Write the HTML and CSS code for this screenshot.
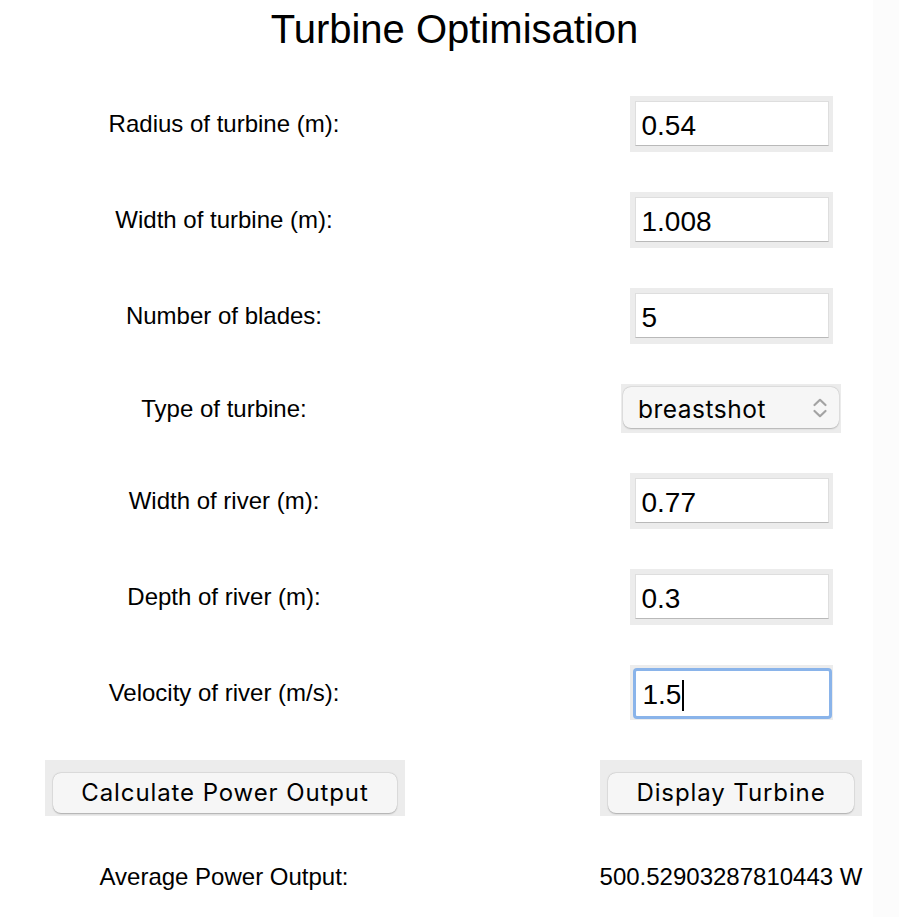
FILE: index.html
```html
<!DOCTYPE html>
<html lang="en">
<head>
<meta charset="utf-8">
<title>Turbine Optimisation</title>
<link rel="stylesheet" href="styles.css">
</head>
<body>
<main class="app">
  <h1 class="title">Turbine Optimisation</h1>

  <section class="form">
    <label class="label" for="radius">Radius of turbine (m):</label>
    <div class="field"><input class="entry" id="radius" type="text" value="0.54"></div>

    <label class="label" for="width">Width of turbine (m):</label>
    <div class="field"><input class="entry" id="width" type="text" value="1.008"></div>

    <label class="label" for="blades">Number of blades:</label>
    <div class="field"><input class="entry" id="blades" type="text" value="5"></div>

    <span class="label">Type of turbine:</span>
    <div class="field field-select">
      <div class="select">
        <span class="select-text">breastshot</span>
        <svg class="chevrons" width="16" height="22" viewBox="0 0 16 22" aria-hidden="true">
          <path d="M2.5 8 L8 2.8 L13.5 8" fill="none" stroke="#a3a3a3" stroke-width="2.2" stroke-linecap="round" stroke-linejoin="round"/>
          <path d="M2.5 14 L8 19.2 L13.5 14" fill="none" stroke="#a3a3a3" stroke-width="2.2" stroke-linecap="round" stroke-linejoin="round"/>
        </svg>
      </div>
    </div>

    <label class="label" for="rwidth">Width of river (m):</label>
    <div class="field"><input class="entry" id="rwidth" type="text" value="0.77"></div>

    <label class="label" for="depth">Depth of river (m):</label>
    <div class="field"><input class="entry" id="depth" type="text" value="0.3"></div>

    <span class="label">Velocity of river (m/s):</span>
    <div class="field field-focus">
      <div class="entry entry-focus">1.5<span class="caret"></span></div>
    </div>

    <div class="btn-wrap btn-wrap-wide"><button class="btn" type="button">Calculate Power Output</button></div>
    <div class="btn-wrap btn-wrap-narrow"><button class="btn" type="button">Display Turbine</button></div>
  </section>

  <section class="result">
    <span class="label">Average Power Output:</span>
    <span class="label">500.52903287810443 W</span>
  </section>
</main>
</body>
</html>
```

FILE: styles.css
```css
html, body {
  margin: 0;
  padding: 0;
}

body {
  width: 899px;
  height: 917px;
  overflow: hidden;
  background: linear-gradient(to right, #ffffff 0, #ffffff 873px, #fcfcfc 873px, #fcfcfc 100%);
  font-family: "Liberation Sans", Arial, sans-serif;
  color: #000;
}

.app {
  padding-top: 6px;
}

.title {
  margin: 0;
  padding-left: 10px;
  font-size: 40px;
  line-height: 46px;
  font-weight: normal;
  text-align: center;
}

.form {
  display: grid;
  grid-template-columns: 448px 336px;
  column-gap: 115px;
  row-gap: 40px;
  margin-top: 44px;
  align-items: center;
}

.label {
  justify-self: center;
  font-size: 24px;
  line-height: 28px;
  white-space: nowrap;
}

.field {
  justify-self: center;
  box-sizing: border-box;
  width: 203px;
  height: 56px;
  padding: 5px 4px 6px 5px;
  background: #ececec;
}

.entry {
  display: block;
  box-sizing: border-box;
  width: 194px;
  height: 45px;
  margin: 0;
  padding: 4px 0 0 6px;
  border: 1px solid #dedede;
  border-bottom-color: #b9b9b9;
  border-radius: 0;
  background: #fff;
  font-family: "Liberation Sans", Arial, sans-serif;
  font-size: 28px;
  color: #000;
  outline: none;
}

.field-select {
  width: 220px;
  height: 49px;
  padding: 3px 2px 5px 2px;
}

.select {
  box-sizing: border-box;
  display: flex;
  align-items: center;
  justify-content: space-between;
  height: 41px;
  padding: 0 11px 0 15px;
  border-radius: 8px;
  background: #f6f6f6;
  box-shadow: 0 0.5px 1.5px rgba(0, 0, 0, 0.22), 0 0 0 0.5px rgba(0, 0, 0, 0.06);
}

.select-text {
  font-family: Inter, "Noto Sans", sans-serif;
  font-size: 24.5px;
  letter-spacing: 0.5px;
  line-height: 28px;
  padding-top: 2px;
}

.chevrons {
  display: block;
}

.field-focus {
  height: 55px;
  padding: 3px 1px 1px 3px;
}

.entry-focus {
  display: flex;
  align-items: center;
  width: 199px;
  height: 51px;
  padding: 3px 0 0 7px;
  border: 3px solid #8ab4ea;
  border-radius: 4px;
  line-height: 32px;
}

.caret {
  display: inline-block;
  width: 2px;
  height: 31px;
  margin-left: 1px;
  background: #000;
}

.btn-wrap {
  justify-self: center;
  box-sizing: border-box;
  height: 56px;
  padding: 13px 8px 3px 8px;
  background: #ececec;
}

.btn-wrap-wide {
  width: 360px;
  margin-left: 2px;
}

.btn-wrap-narrow {
  width: 262px;
}

.btn {
  display: block;
  width: 100%;
  height: 40px;
  margin: 0;
  padding: 0 0 2px 0;
  border: none;
  border-radius: 8px;
  background: #f6f6f6;
  box-shadow: 0 0.5px 1.5px rgba(0, 0, 0, 0.25), 0 0 0 0.5px rgba(0, 0, 0, 0.06);
  font-family: Inter, "Noto Sans", sans-serif;
  font-size: 24px;
  letter-spacing: 0.9px;
  color: #000;
}

.result {
  display: grid;
  grid-template-columns: 448px 336px;
  column-gap: 115px;
  margin-top: 47px;
}
```
